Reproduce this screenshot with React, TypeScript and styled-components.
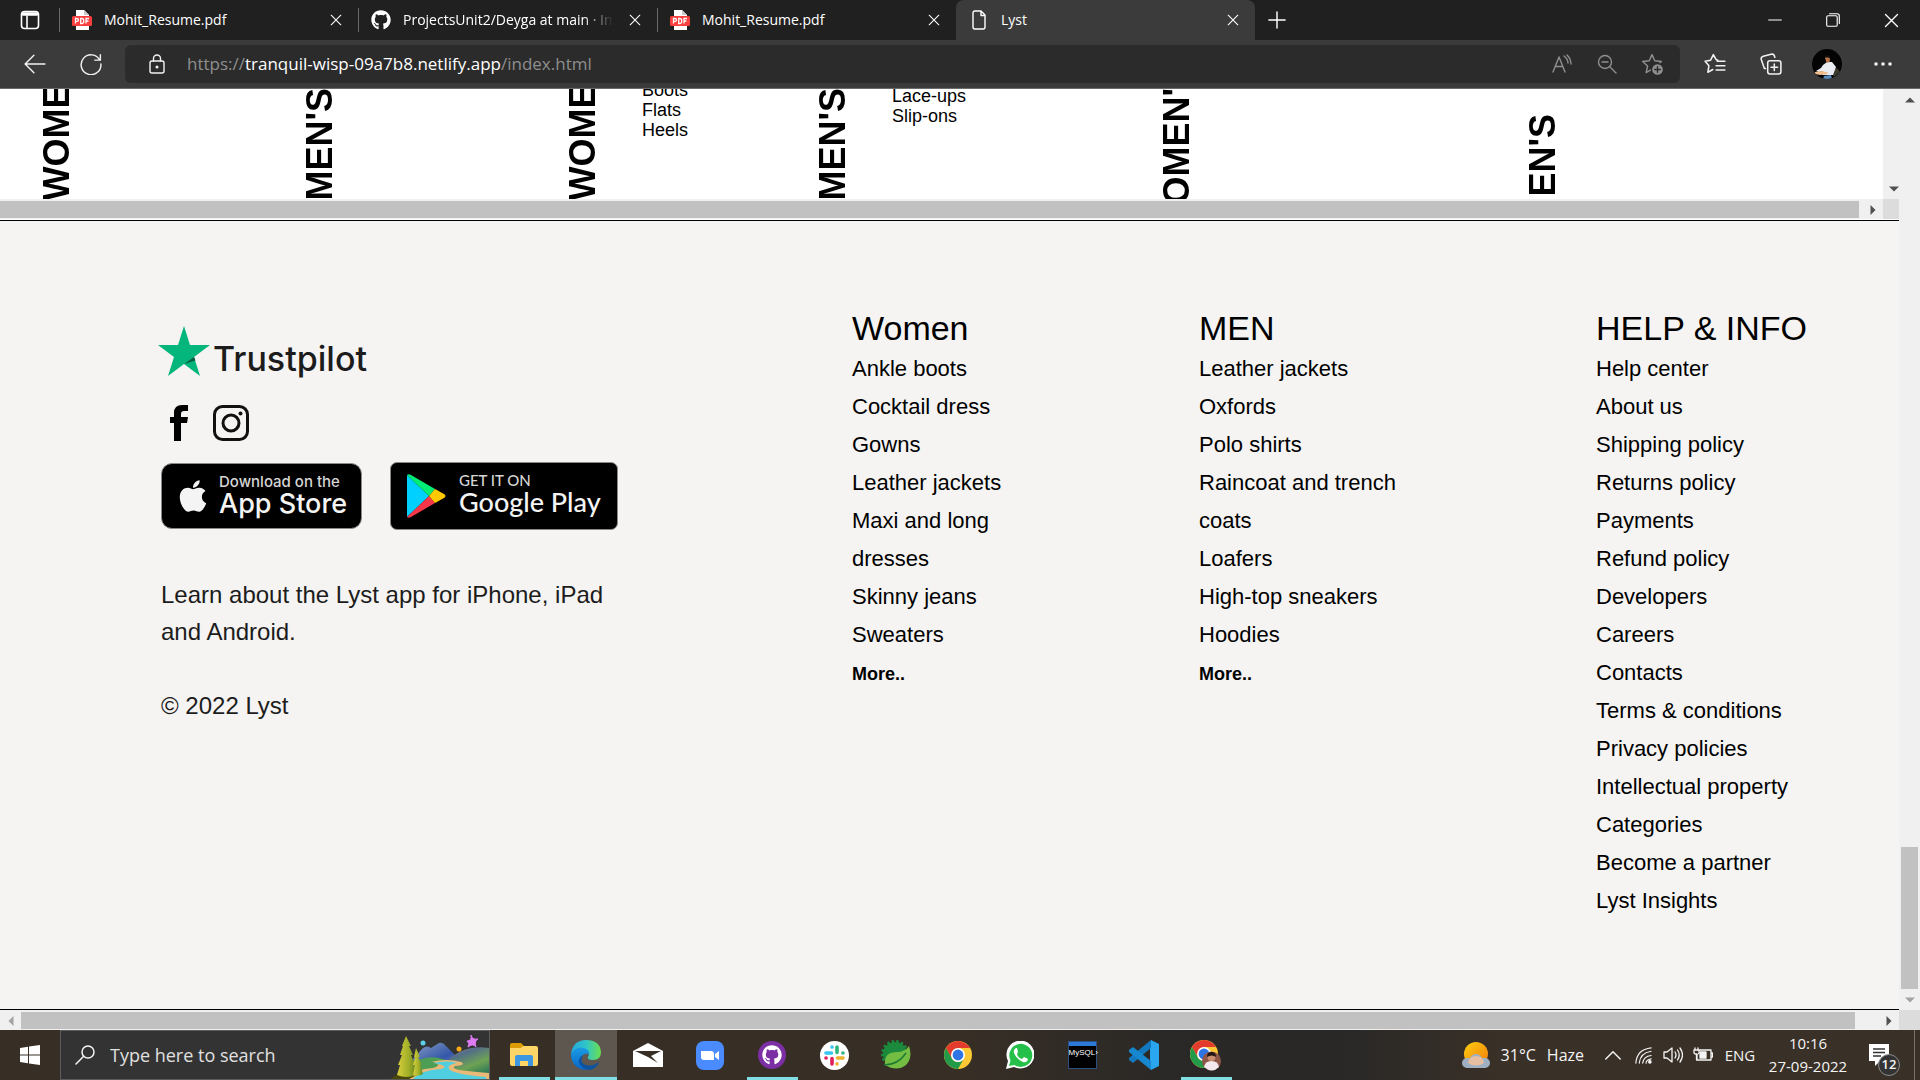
import React from "react";
import styled, { createGlobalStyle } from "styled-components";
import { FaApple, FaGithub } from "react-icons/fa";

const GlobalStyle = createGlobalStyle`
  * { box-sizing: border-box; }
  body { margin: 0; overflow: hidden; }
  button { border: 0; padding: 0; background: none; color: inherit; font: inherit; cursor: pointer; }
  a { color: inherit; text-decoration: none; }
  ul { list-style: none; margin: 0; padding: 0; }
  h2, h3, p { margin: 0; font-weight: 400; }
  svg { display: block; flex: none; }
`;

const uiFont = `"Open Sans", "Noto Sans", sans-serif`;
const siteFont = `"Liberation Sans", Arial, sans-serif`;

const Screen = styled.div`
  height: 100vh;
  display: flex;
  flex-direction: column;
  font-family: ${uiFont};
`;

/* ---------- tab strip ---------- */

const TabStrip = styled.header`
  display: flex;
  height: 40px;
  background: #202020;
  color: #fff;
`;

const TabMenu = styled.button`
  width: 59px;
  display: grid;
  place-items: center;
`;

const Tab = styled.div<{ $active?: boolean }>`
  flex: 0 1 299px;
  min-width: 0;
  display: flex;
  align-items: center;
  gap: 12px;
  padding: 0 12px 0 14px;
  font-size: 14px;
  background: ${(p) => (p.$active ? "#3b3b3b" : "transparent")};
  border-radius: ${(p) => (p.$active ? "8px 8px 0 0" : "0")};

  &::before {
    content: "";
    width: 1px;
    height: 24px;
    margin: 0 0 0 -14px;
    background: ${(p) => (p.$active ? "transparent" : "#6a6a6a")};
  }
`;

const TabTitle = styled.span<{ $fade?: boolean }>`
  flex: 1;
  overflow: hidden;
  white-space: nowrap;
  line-height: 24px;
  mask-image: ${(p) => (p.$fade ? "linear-gradient(90deg, #000 86%, transparent)" : "none")};
`;

const CloseTab = styled.button`
  width: 20px;
  height: 20px;
  display: grid;
  place-items: center;
`;

const NewTab = styled.button`
  width: 44px;
  display: grid;
  place-items: center;
`;

const WindowControls = styled.div`
  margin-left: auto;
  display: flex;
`;

const WindowButton = styled.button`
  width: 58px;
  display: grid;
  place-items: center;
`;

/* ---------- toolbar ---------- */

const Toolbar = styled.nav`
  display: flex;
  align-items: center;
  height: 49px;
  background: #3b3b3b;
  border-bottom: 1px solid #6b6b6b;
  color: #f2f2f2;
`;

const ToolButton = styled.button`
  width: 56px;
  height: 38px;
  display: grid;
  place-items: center;
`;

const NavGroup = styled.div`
  display: flex;
  padding: 0 6px 0 7px;
`;

const AddressBar = styled.div`
  flex: 1;
  display: flex;
  align-items: center;
  height: 38px;
  padding: 0 6px 0 10px;
  border-radius: 6px;
  background: #2b2b2b;
`;

const SiteInfo = styled.button`
  width: 44px;
  height: 38px;
  display: grid;
  place-items: center;
`;

const Address = styled.button`
  flex: 1;
  padding-left: 8px;
  text-align: left;
  font-size: 17px;
  line-height: 24px;
  color: #8f8f8f;
  cursor: text;
`;

const Host = styled.span`
  color: #fff;
`;

const BarButton = styled.button`
  width: 45px;
  height: 38px;
  display: grid;
  place-items: center;
  color: #8f8f8f;
`;

const ToolGroup = styled.div`
  display: flex;
  padding: 0 9px 0 7px;
`;

/* ---------- scrollbars ---------- */

const Track = styled.div<{ $vertical?: boolean }>`
  display: flex;
  flex: none;
  flex-direction: ${(p) => (p.$vertical ? "column" : "row")};
  ${(p) => (p.$vertical ? "width: 21px" : "height: 20px")};
  background: #f0f0f0;
`;

const ArrowButton = styled.button<{ $dim?: boolean }>`
  flex: none;
  width: 21px;
  height: 21px;
  display: grid;
  place-items: center;
  color: ${(p) => (p.$dim ? "#a3a3a3" : "#505050")};
`;

const Run = styled.div<{ $vertical?: boolean; $end?: boolean }>`
  flex: 1;
  display: flex;
  flex-direction: ${(p) => (p.$vertical ? "column" : "row")};
  justify-content: ${(p) => (p.$end ? "flex-end" : "flex-start")};
  padding: ${(p) => (p.$vertical ? "0 2px" : "2px 0 1px")};
`;

const Thumb = styled.div<{ $size: string }>`
  flex: 0 0 ${(p) => p.$size};
  background: #c1c1c1;
`;

const Corner = styled.div`
  flex: none;
  width: 21px;
  height: 20px;
  background: #dcdcdc;
`;

/* ---------- page ---------- */

const Viewport = styled.main`
  flex: 1;
  min-height: 0;
  display: grid;
  grid-template-columns: minmax(0, 1fr) 21px;
  grid-template-rows: minmax(0, 1fr) 20px;
  background: #fff;
`;

const Page = styled.div`
  display: flex;
  flex-direction: column;
  overflow: hidden;
  font-family: ${siteFont};
  color: #000;
`;

const MenuFrame = styled.section`
  display: grid;
  grid-template-columns: minmax(0, 1fr) 16px;
  grid-template-rows: 110px 21px;
  overflow: hidden;
`;

const MenuRow = styled.div`
  display: grid;
  grid-template-columns: 263fr 263fr 250fr 344fr 366fr 360fr;
  padding-left: 37px;
  overflow: hidden;
`;

const MenuColumn = styled.div`
  display: flex;
  align-items: flex-end;
  gap: 39px;
  height: 110px;
`;

const SideHeading = styled.h2<{ $drop: number }>`
  flex: none;
  margin-bottom: ${(p) => -p.$drop}px;
  writing-mode: vertical-rl;
  transform: rotate(180deg);
  font-size: 36px;
  line-height: 40px;
  font-weight: 700;
  white-space: nowrap;
`;

const MenuList = styled.ul<{ $rise: number }>`
  padding-bottom: ${(p) => p.$rise}px;
  font-size: 18px;
  line-height: 20px;
  li { margin: 0; white-space: nowrap; }
`;

const InnerBar = styled.div`
  width: 16px;
  height: 110px;
  display: flex;
  flex-direction: column;
  justify-content: flex-end;
  overflow: hidden;
  background: #f0f0f0;
`;

const Footer = styled.footer`
  flex: 1;
  display: grid;
  grid-template-columns: 692fr 347fr 397fr 303fr;
  align-items: start;
  padding: 86px 0 0 160px;
  background: #f5f4f2;
  border-top: 1px solid #000;
  border-bottom: 1px solid #000;
`;

const Brand = styled.div`
  display: flex;
  flex-direction: column;
  align-items: flex-start;
  padding-top: 19px;
  color: #1c1c1c;
`;

const Trust = styled.a`
  display: flex;
  align-items: flex-start;
  gap: 3px;
  height: 54px;
  font-family: Inter, ${siteFont};
  font-size: 34px;
  line-height: 66px;
  font-weight: 500;
  margin-left: -2px;
`;

const Social = styled.div`
  display: flex;
  gap: 16px;
  padding: 25px 0 21px 1px;
  color: #000;
  a { width: 36px; height: 36px; display: grid; place-items: center; }
`;

const Badges = styled.div`
  display: flex;
  align-items: center;
  gap: 28px;
  padding-left: 1px;
`;

const Badge = styled.a<{ $wide?: boolean }>`
  display: flex;
  align-items: center;
  gap: ${(p) => (p.$wide ? 13 : 8)}px;
  width: ${(p) => (p.$wide ? 228 : 201)}px;
  height: ${(p) => (p.$wide ? 68 : 66)}px;
  padding-left: ${(p) => (p.$wide ? 16 : 13)}px;
  border: 1px solid #8a8a8a;
  border-radius: ${(p) => (p.$wide ? 7 : 11)}px;
  background: #000;
  color: #f4f4f4;
`;

const BadgeText = styled.span<{ $wide?: boolean }>`
  display: flex;
  flex-direction: column;
  font-family: ${(p) => (p.$wide ? "Lato" : "Inter")}, sans-serif;
  font-size: 27px;
  line-height: 28px;
  font-weight: 500;
  white-space: nowrap;
  padding-bottom: ${(p) => (p.$wide ? 4 : 0)}px;
  small { font-size: 15px; line-height: 16px; color: #d6d6d6; }
`;

const About = styled.p`
  padding: 46px 0 0 1px;
  max-width: 470px;
  font-size: 24px;
  line-height: 37px;
`;

const Copyright = styled.p`
  padding: 37px 0 0 1px;
  font-size: 24px;
  line-height: 37px;
`;

const LinkColumn = styled.section`
  max-width: 228px;
`;

const ColumnTitle = styled.h3`
  font-size: 34px;
  line-height: 43px;
  white-space: nowrap;
`;

const Links = styled.ul<{ $width: number }>`
  max-width: ${(p) => p.$width}px;
  font-size: 22px;
  line-height: 38px;
`;

const More = styled.a`
  font-size: 18px;
  font-weight: 700;
`;

/* ---------- taskbar ---------- */

const Taskbar = styled.footer`
  flex: none;
  display: flex;
  height: 50px;
  background: linear-gradient(90deg, #372e25 0%, #372e25 50%, #292827 62%, #292827 70%, #393027 78%, #393027 100%);
  color: #f5f5f5;
`;

const Start = styled.button`
  width: 60px;
  display: grid;
  place-items: center;
`;

const Search = styled.label`
  display: flex;
  align-items: center;
  width: 430px;
  padding-left: 14px;
  gap: 15px;
  background: #333;
  border: 1px solid #5c5c5c;
  input {
    flex: 1;
    min-width: 0;
    border: 0;
    outline: 0;
    padding: 0;
    background: none;
    font-family: ${uiFont};
    font-size: 18px;
    color: #e4e4e4;
  }
  input::placeholder { color: #e0e0e0; opacity: 1; }
`;

const Apps = styled.div`
  display: flex;
  padding-left: 3px;
`;

const AppButton = styled.button<{ $state?: "open" | "active" }>`
  width: 62px;
  height: 50px;
  display: grid;
  place-items: center;
  background: ${(p) => (p.$state === "active" ? "#5d574f" : "none")};
  background-image: ${(p) => (p.$state ? "linear-gradient(#7fdfe4, #7fdfe4)" : "none")};
  background-repeat: no-repeat;
  background-position: center bottom;
  background-size: ${(p) => (p.$state === "active" ? 62 : 51)}px 3px;
`;

const Tray = styled.div`
  margin-left: auto;
  display: flex;
  align-items: center;
`;

const Weather = styled.button`
  display: flex;
  align-items: center;
  gap: 11px;
  margin-right: 14px;
  font-size: 16px;
`;

const TrayButton = styled.button<{ $w: number }>`
  width: ${(p) => p.$w}px;
  height: 50px;
  display: grid;
  place-items: center;
  font-size: 15px;
`;

const Clock = styled.button`
  width: 92px;
  font-size: 15px;
  line-height: 23px;
  text-align: center;
`;

const Notices = styled.button`
  position: relative;
  width: 50px;
  height: 50px;
  margin-right: 10px;
  display: grid;
  place-items: center;
`;

const Count = styled.span`
  position: absolute;
  left: 24px;
  top: 24px;
  width: 22px;
  height: 22px;
  border: 1px solid #8d8d8d;
  border-radius: 50%;
  background: #333;
  font-size: 13px;
  line-height: 19px;
  font-weight: 600;
`;

const ShowDesktop = styled.button`
  width: 6px;
  height: 50px;
  border-left: 1px solid #77716a;
`;

/* ---------- drawings ---------- */

const Line = ({ size = 20, w = 1.4, children }: { size?: number; w?: number; children: React.ReactNode }) => (
  <svg width={size} height={size} viewBox="0 0 20 20" fill="none" stroke="currentColor" strokeWidth={w} strokeLinecap="round" strokeLinejoin="round">
    {children}
  </svg>
);

const Cross = ({ size = 12 }: { size?: number }) => (
  <Line size={size} w={1.8}><path d="M2 2l16 16M18 2L2 18" /></Line>
);

const PdfIcon = () => (
  <svg width="20" height="20" viewBox="0 0 20 20">
    <path d="M4 0h8l5 5v15H4z" fill="#fff" />
    <path d="M12 0l5 5h-5z" fill="#c9c9c9" />
    <rect x="0" y="6" width="20" height="10" rx="1.5" fill="#f8403f" />
    <path d="M3.500 13.500v-5h1.500a1.400 1.400 0 0 1 0 2.900H3.500M8.700 8.500v5h1a2 2 0 0 0 2-2.500 2 2 0 0 0-2-2.500zM14 13.500v-5h3M14 11h2.500" fill="none" stroke="#fff" strokeWidth="1.300" />
  </svg>
);

const Arrow = ({ d }: { d: string }) => (
  <svg width="10" height="10" viewBox="0 0 10 10"><path d={d} fill="currentColor" /></svg>
);
const UP = "M0 7.500L5 2.500L10 7.500z";
const DOWN = "M0 2.500L5 7.500L10 2.500z";
const LEFT = "M7.500 0L2.500 5L7.500 10z";
const RIGHT = "M2.500 0L7.500 5L2.500 10z";

const TrustStar = () => (
  <svg width="52" height="50" viewBox="0 0 52 50">
    <path d="M26 0l6 19h20L36 31l6 19-16-12-16 12 6-19L0 19h20z" fill="#04b67b" />
    <path d="M37.500 34.500L36 31 26 38z" fill="#075c41" />
  </svg>
);

const FacebookMark = () => (
  <svg width="18" height="36" viewBox="0 0 18 36">
    <path d="M4 36V18H0v-6h4V8q0-8 8-8h6v6h-4q-3 0-3 3v3h7l-1 6h-6v18z" fill="#000" />
  </svg>
);

const InstagramMark = () => (
  <svg width="36" height="36" viewBox="0 0 36 36" fill="none" stroke="#111" strokeWidth="3">
    <rect x="1.500" y="1.500" width="33" height="33" rx="8" />
    <circle cx="18" cy="18" r="8" />
    <circle cx="27.500" cy="8.500" r="2" fill="#111" stroke="none" />
  </svg>
);

const PlayIcon = () => (
  <svg width="39" height="44" viewBox="0 0 39 44">
    <path d="M0 1v42l22-21z" fill="#00d0ff" />
    <path d="M0 1c1-1 2-1 4 0l24 14-6 7z" fill="#00ee76" />
    <path d="M0 43c1 1 2 1 4 0l24-14-6-7z" fill="#f6374a" />
    <path d="M28 15l9 5q3 2 0 4l-9 5-6-7z" fill="#ffc900" />
  </svg>
);

const Avatar = () => (
  <svg width="30" height="30" viewBox="0 0 30 30">
    <clipPath id="face"><circle cx="15" cy="15" r="15" /></clipPath>
    <g clipPath="url(#face)">
      <rect width="30" height="30" fill="#040404" />
      <path d="M19 22l6-3 3 4-6 5z" fill="#3c3a2c" />
      <path d="M11 16l4-3 5 0 4 5-3 8H10l1-4-4 1-3-1 5-3z" fill="#e9edf2" />
      <path d="M13 9q0-2 2.500-2t2.500 2.500-1 4h-2.500z" fill="#b9734b" />
      <path d="M12.500 8.500q.500-2.500 3-2.500t2.500 3.500l-2-1z" fill="#15100e" />
      <path d="M3 23l7-1 6 1.500-1 1.500-7 1-5-1z" fill="#f0bd8a" />
      <path d="M12 27l7-1 1 4h-9z" fill="#5a8cc0" />
    </g>
  </svg>
);

const Landscape = () => (
  <svg width="98" height="48" viewBox="0 0 98 48">
    <defs>
      <linearGradient id="mt" x1="0" x2="1" y2="1"><stop stopColor="#8ba2c4" /><stop offset=".6" stopColor="#3557a8" /><stop offset="1" stopColor="#6e84c8" /></linearGradient>
      <linearGradient id="hill" x1="0" y1="0" x2=".6" y2="1"><stop stopColor="#b69b8e" /><stop offset=".35" stopColor="#526e88" /><stop offset=".7" stopColor="#6ea254" /><stop offset="1" stopColor="#2f7a55" /></linearGradient>
      <linearGradient id="tree" x1="0" x2="1"><stop stopColor="#d9cf3c" /><stop offset=".6" stopColor="#9fae28" /><stop offset="1" stopColor="#5f7d1c" /></linearGradient>
    </defs>
    <path d="M20 30l12-13q4-3 8 0l8-5q4-1 7 3l8 8 6 9v6H22z" fill="url(#mt)" />
    <path d="M20 33q14-9 28-6l14 4-22 17H14z" fill="#4d9d55" />
    <path d="M54 32Q72 13 98 17v31H50z" fill="url(#hill)" />
    <path d="M40 31q16-4 30 0 6 3-6 4-4 2 4 4 16 2 30 3v6H16q8-10 26-11 10-3 0-6z" fill="#e9b977" />
    <path d="M42 32q16-3 24 0-12 2-7 7 8 5 36 7v2H22q8-9 28-10 10-3-8-6z" fill="#4fcfe0" />
    <path d="M0 48q8-8 20-4l4 1-6 3z" fill="#4b4708" />
    <path d="M15 5l5 10h-2l4 9h-2l5 11h-2l3 9q-11 4-20 0l3-10H7l4-10H9l3-9h-1z" fill="url(#tree)" />
    <path d="M25 17l4 9h-2l4 8h-2l3 9q-5 3-10 1l2-10h-2l2-8h-1z" fill="url(#tree)" />
    <circle cx="32" cy="12" r="2.500" fill="#5ecfe8" />
    <circle cx="68" cy="18" r="2.500" fill="#fbab18" />
    <path d="M80 4q1 5 7 4-4 2-2 8-3-4-8 0 2-4-1-6 5 0 4-6z" fill="#dd7bf2" stroke="#dd7bf2" />
  </svg>
);

const ExplorerIcon = () => (
  <svg width="28" height="24" viewBox="0 0 28 24">
    <path d="M0 2q0-2 2-2h9l3 3v6H0z" fill="#dd9b05" />
    <path d="M0 5h11l2-2h13q2 0 2 2v16q0 2-2 2H2q-2 0-2-2z" fill="#ffd565" />
    <path d="M5 23v-9q0-2 2-2h14q2 0 2 2v9h-5v-5h-8v5z" fill="#3d96e0" />
  </svg>
);

const EdgeIcon = () => (
  <svg width="30" height="30" viewBox="0 0 30 30">
    <defs>
      <linearGradient id="eg" x1="0" x2="1"><stop stopColor="#24a7e0" /><stop offset=".5" stopColor="#2fc5c8" /><stop offset="1" stopColor="#6be04e" /></linearGradient>
      <linearGradient id="eb" x1="0" x2="0" y2="1"><stop stopColor="#1a9ce2" /><stop offset="1" stopColor="#0a66c9" /></linearGradient>
    </defs>
    <path d="M0 14Q2 0 15 0q14 0 15 12 0 8-8 8-6 0-5-3 3-4-2-7Q7 5 0 14z" fill="url(#eg)" />
    <path d="M0 14Q5 6 13 8q6 2 5 7-2-3-6 0-4 5 1 10 3 4 7 4Q9 32 3 24 0 20 0 14z" fill="url(#eb)" />
    <path d="M12 15q-4 8 3 10 6 2 13-3-2 6-9 8-8-1-11-7-1-5 4-8z" fill="#0c54a0" />
  </svg>
);

const MailIcon = () => (
  <svg width="30" height="24" viewBox="0 0 30 24">
    <path d="M0 8L15 0l15 8v16H0z" fill="#fff" />
    <path d="M2 8h26L18 13l7 7-10-6z" fill="#372e25" />
  </svg>
);

const ZoomIcon = () => (
  <svg width="28" height="29" viewBox="0 0 28 29">
    <rect width="28" height="29" rx="8" fill="#4a8cff" />
    <path d="M5 10h10q3 0 3 3v6H8q-3 0-3-3zM19 13l4-3v9l-4-3z" fill="#fff" />
  </svg>
);

const GithubDesktop = () => (
  <svg width="28" height="28" viewBox="0 0 28 28">
    <circle cx="14" cy="14" r="14" fill="#7c2fa4" />
    <g transform="translate(4 4)"><FaGithub size={20} color="#fff" /></g>
  </svg>
);

const SlackIcon = () => (
  <svg width="29" height="29" viewBox="0 0 29 29">
    <circle cx="14.500" cy="14.500" r="14.500" fill="#fff" />
    <g strokeWidth="3.600" strokeLinecap="round">
      <path d="M6 12h5.500M12 6v.1" stroke="#36c5f0" />
      <path d="M17 6v5.500M23 12h-.1" stroke="#2eb67d" />
      <path d="M23 17h-5.500M17 23v-.1" stroke="#ecb22e" />
      <path d="M12 23v-5.500M6 17h.1" stroke="#e01e5a" />
    </g>
  </svg>
);

const SpringIcon = () => (
  <svg width="30" height="30" viewBox="0 0 30 30">
    <circle cx="14" cy="14" r="12" fill="#1c8a3c" />
    <circle cx="14" cy="14" r="12.500" fill="none" stroke="#1c8a3c" strokeWidth="3" strokeDasharray="2.500 2.100" />
    <path d="M4 24Q3 12 16 12q8 0 12-6 4 12-3 19-9 7-21 0z" fill="#74bd43" />
    <path d="M3 25q14 0 22-12" fill="none" stroke="#1d7a34" strokeWidth="1.500" />
  </svg>
);

const ChromeMark = () => (
  <g>
    <circle cx="14" cy="14" r="14" fill="#fcc934" />
    <path d="M14 7h12.100A14 14 0 0 0 1.900 7L8 17.500z" fill="#e33b2e" />
    <path d="M1.900 7A14 14 0 0 0 14 28l6-10.500A7 7 0 0 1 8 17.500z" fill="#229a4a" />
    <circle cx="14" cy="14" r="7" fill="#fff" />
    <circle cx="14" cy="14" r="5.400" fill="#2f74e4" />
  </g>
);

const ChromeIcon = () => (
  <svg width="28" height="28" viewBox="0 0 28 28"><ChromeMark /></svg>
);

const ChromeProfile = () => (
  <svg width="32" height="31" viewBox="0 0 32 31">
    <ChromeMark />
    <circle cx="21.500" cy="21" r="9.500" fill="#8d5748" />
    <path d="M14 27q1-6 7.500-6t7.500 6q-7 7-15 0z" fill="#f3e9ee" />
    <circle cx="21.500" cy="17" r="4" fill="#c98e70" />
    <path d="M17 17q0-5 4.500-5t4.500 5q-4-3-9 0z" fill="#221514" />
  </svg>
);

const WhatsappIcon = () => (
  <svg width="28" height="28" viewBox="0 0 28 28">
    <path d="M0 28l2-8A14 14 0 1 1 8 26z" fill="#fff" />
    <path d="M3 25l1.500-5.500A11.500 11.500 0 1 1 8.500 24z" fill="#25c04a" />
    <path d="M10 7q-4 2-1 7t8 7q4 1 5-3l-4-2-2 2q-4-1-5-5l1-2-1-4z" fill="#fff" />
  </svg>
);

const MysqlBox = styled.span`
  display: flex;
  flex-direction: column;
  width: 29px;
  height: 28px;
  padding-top: 5px;
  border: 1px solid #2c4f80;
  background: linear-gradient(#2b79d8 4px, #000 4px);
  font-family: "Liberation Sans", sans-serif;
  font-size: 8px;
  line-height: 12px;
  color: #fff;
`;

const VscodeIcon = () => (
  <svg width="30" height="30" viewBox="0 0 30 30">
    <path d="M22 0l8 4v22l-8 4-1-6V6z" fill="#2aa5f0" />
    <path d="M22 0v8L4 23 0 20v-2z" fill="#1478be" />
    <path d="M0 10l4-3 18 14v9L0 12z" fill="#1787d0" />
  </svg>
);

const WeatherIcon = () => (
  <svg width="28" height="28" viewBox="0 0 28 28">
    <defs><linearGradient id="sun" x1="0" x2="1" y2="1"><stop stopColor="#ffcf0f" /><stop offset="1" stopColor="#f07a0c" /></linearGradient></defs>
    <circle cx="14" cy="13" r="12" fill="url(#sun)" />
    <path d="M5 27a5 5 0 0 1 0-10l3 0q2-4 6-4t6 4h3a5 5 0 0 1 0 10z" fill="#9fb0c2" />
    <path d="M6 22q1-7 8-7t8 7q-8 5-16 0z" fill="#e5bf9f" />
  </svg>
);

/* ---------- data ---------- */

const menu = [
  { title: "WOMEN'S", drop: 2 },
  { title: "MEN'S", drop: 2 },
  { title: "WOMEN'S", drop: 2, rise: 59, items: ["Boots", "Flats", "Heels"] },
  { title: "MEN'S", drop: 2, rise: 73, items: ["Lace-ups", "Slip-ons"] },
  { title: "WOMEN'S", drop: 40 },
  { title: "MEN'S", drop: 28 },
];

const columns = [
  {
    title: "Women",
    width: 180,
    links: ["Ankle boots", "Cocktail dress", "Gowns", "Leather jackets", "Maxi and long dresses", "Skinny jeans", "Sweaters"],
    more: true,
  },
  {
    title: "MEN",
    width: 228,
    links: ["Leather jackets", "Oxfords", "Polo shirts", "Raincoat and trench coats", "Loafers", "High-top sneakers", "Hoodies"],
    more: true,
  },
  {
    title: "HELP & INFO",
    width: 228,
    links: [
      "Help center", "About us", "Shipping policy", "Returns policy", "Payments", "Refund policy", "Developers", "Careers",
      "Contacts", "Terms & conditions", "Privacy policies", "Intellectual property", "Categories", "Become a partner", "Lyst Insights",
    ],
  },
];

const tabs = [
  { title: "Mohit_Resume.pdf", icon: <PdfIcon /> },
  { title: "ProjectsUnit2/Deyga at main · Im", icon: <FaGithub size={20} />, fade: true },
  { title: "Mohit_Resume.pdf", icon: <PdfIcon /> },
  { title: "Lyst", icon: <Line><path d="M4 3q0-2 2-2h6l4 4v12q0 2-2 2H6q-2 0-2-2zM12 1v4.500h4" /></Line>, active: true },
];

const apps: { name: string; icon: React.ReactNode; state?: "open" | "active" }[] = [
  { name: "File Explorer", icon: <ExplorerIcon />, state: "open" },
  { name: "Edge", icon: <EdgeIcon />, state: "active" },
  { name: "Mail", icon: <MailIcon /> },
  { name: "Zoom", icon: <ZoomIcon /> },
  { name: "GitHub Desktop", icon: <GithubDesktop />, state: "open" },
  { name: "Slack", icon: <SlackIcon /> },
  { name: "Spring Tools", icon: <SpringIcon /> },
  { name: "Chrome", icon: <ChromeIcon /> },
  { name: "WhatsApp", icon: <WhatsappIcon /> },
  { name: "MySQL Shell", icon: <MysqlBox>MySQL›</MysqlBox> },
  { name: "VS Code", icon: <VscodeIcon /> },
  { name: "Chrome profile", icon: <ChromeProfile />, state: "open" },
];

const STAR = "M10 1.500l2.500 5.600 6 .6-4.500 4.100 1.300 6L10 14.700l-5.300 3.100 1.300-6L1.500 7.700l6-.6z";

export default function App() {
  return (
    <Screen>
      <GlobalStyle />
      <TabStrip>
        <TabMenu aria-label="Tab actions">
          <Line w={1.6}><rect x="1.500" y="1.500" width="17" height="17" rx="3" /><path d="M3 4h14" strokeWidth="3.500" /><path d="M7 6v12" /></Line>
        </TabMenu>
        {tabs.map((t, i) => (
          <Tab key={i} $active={t.active}>
            {t.icon}
            <TabTitle $fade={t.fade}>{t.title}</TabTitle>
            <CloseTab aria-label="Close tab"><Cross /></CloseTab>
          </Tab>
        ))}
        <NewTab aria-label="New tab"><Line size={18} w={1.6}><path d="M10 1v18M1 10h18" /></Line></NewTab>
        <WindowControls>
          <WindowButton aria-label="Minimize"><Line size={14} w={1.6}><path d="M1 10h18" /></Line></WindowButton>
          <WindowButton aria-label="Restore"><Line size={14} w={1.6}><rect x="1" y="4" width="15" height="15" rx="2" /><path d="M5 1h11q3 0 3 3v11" /></Line></WindowButton>
          <WindowButton aria-label="Close"><Cross size={15} /></WindowButton>
        </WindowControls>
      </TabStrip>

      <Toolbar>
        <NavGroup>
          <ToolButton aria-label="Back"><Line size={22} w={1.3}><path d="M19 10H1M9 2l-8 8 8 8" /></Line></ToolButton>
          <ToolButton aria-label="Refresh"><Line size={22} w={1.3}><path d="M18 6.500A9 9 0 1 0 19 10M18.500 1.500v5h-5" /></Line></ToolButton>
        </NavGroup>
        <AddressBar>
          <SiteInfo aria-label="Site information">
            <Line w={1.4}><rect x="3" y="7" width="14" height="12" rx="2" /><path d="M6.500 7V4.500a3.500 3.500 0 0 1 7 0V7" /><circle cx="10" cy="13" r=".8" fill="currentColor" /></Line>
          </SiteInfo>
          <Address aria-label="Address">https://<Host>tranquil-wisp-09a7b8.netlify.app</Host>/index.html</Address>
          <BarButton aria-label="Read aloud"><Line><path d="M1 18L7 3l6 15M3.500 12.500h7M12 2q4 3 4 7M15 1q4 4 4 9" /></Line></BarButton>
          <BarButton aria-label="Zoom out"><Line><circle cx="8" cy="8" r="6.500" /><path d="M13 13l6 6M5 8h6" /></Line></BarButton>
          <BarButton aria-label="Add to favorites">
            <Line size={22} w={1.3}><path d={STAR} /><circle cx="15" cy="15" r="5.500" fill="currentColor" stroke="#2b2b2b" /><path d="M15 12.500v5M12.500 15h5" stroke="#2b2b2b" /></Line>
          </BarButton>
        </AddressBar>
        <ToolGroup>
          <ToolButton aria-label="Favorites"><Line size={22}><path d="M12.500 6.500L11 6 8.500 1.500 6 6.500l-5 1 3.500 4-1 6 4.500-2.500M12 7.500h7M11 11.500h8M11 15.500h8" /></Line></ToolButton>
          <ToolButton aria-label="Collections"><Line size={22}><rect x="7" y="7" width="12" height="12" rx="2" /><path d="M13 10v6M10 13h6M5 14L4 14 1 5.500Q1 3.500 3 3l8-2q2 0 2.500 3" /></Line></ToolButton>
          <ToolButton aria-label="Profile"><Avatar /></ToolButton>
          <ToolButton aria-label="More"><svg width="18" height="4" viewBox="0 0 18 4" fill="currentColor"><circle cx="2" cy="2" r="1.800" /><circle cx="9" cy="2" r="1.800" /><circle cx="16" cy="2" r="1.800" /></svg></ToolButton>
        </ToolGroup>
      </Toolbar>

      <Viewport>
        <Page>
          <MenuFrame>
            <MenuRow>
              {menu.map((m, i) => (
                <MenuColumn key={i}>
                  <SideHeading $drop={m.drop}>{m.title}</SideHeading>
                  {m.items && <MenuList $rise={m.rise}>{m.items.map((t) => <li key={t}><a href="#">{t}</a></li>)}</MenuList>}
                </MenuColumn>
              ))}
            </MenuRow>
            <InnerBar><ArrowButton aria-label="Scroll down"><Arrow d={DOWN} /></ArrowButton></InnerBar>
            <Track>
              <Run><Thumb $size="calc(100% - 3px)" /></Run>
              <ArrowButton aria-label="Scroll right"><Arrow d={RIGHT} /></ArrowButton>
            </Track>
            <Corner />
          </MenuFrame>
          <Footer>
            <Brand>
              <Trust href="#"><TrustStar />Trustpilot</Trust>
              <Social>
                <a href="#" aria-label="Facebook"><FacebookMark /></a>
                <a href="#" aria-label="Instagram"><InstagramMark /></a>
              </Social>
              <Badges>
                <Badge href="#">
                  <FaApple size={36} />
                  <BadgeText><small>Download on the</small>App Store</BadgeText>
                </Badge>
                <Badge href="#" $wide>
                  <PlayIcon />
                  <BadgeText $wide><small>GET IT ON</small>Google Play</BadgeText>
                </Badge>
              </Badges>
              <About>Learn about the Lyst app for iPhone, iPad and Android.</About>
              <Copyright>© 2022 Lyst</Copyright>
            </Brand>
            {columns.map((c) => (
              <LinkColumn key={c.title}>
                <ColumnTitle>{c.title}</ColumnTitle>
                <Links $width={c.width}>
                  {c.links.map((l) => <li key={l}><a href="#">{l}</a></li>)}
                  {c.more && <li><More href="#">More..</More></li>}
                </Links>
              </LinkColumn>
            ))}
          </Footer>
        </Page>
        <Track $vertical>
          <ArrowButton aria-label="Scroll up"><Arrow d={UP} /></ArrowButton>
          <Run $vertical $end><Thumb $size="142px" /></Run>
          <ArrowButton $dim aria-label="Scroll down"><Arrow d={DOWN} /></ArrowButton>
        </Track>
        <Track>
          <ArrowButton $dim aria-label="Scroll left"><Arrow d={LEFT} /></ArrowButton>
          <Run><Thumb $size="calc(100% - 23px)" /></Run>
          <ArrowButton aria-label="Scroll right"><Arrow d={RIGHT} /></ArrowButton>
        </Track>
        <Corner />
      </Viewport>

      <Taskbar>
        <Start aria-label="Start">
          <svg width="20" height="20" viewBox="0 0 20 20" fill="#fff"><path d="M0 3l8-1.200V9.500H0zM9 1.600L20 0v9.500H9zM0 10.500h8v7.700L0 17zM9 10.500h11V20L9 18.400z" /></svg>
        </Start>
        <Search>
          <Line w={1.5}><circle cx="13" cy="7" r="6" /><path d="M8.700 11.300L1 19" /></Line>
          <input type="text" aria-label="Search" placeholder="Type here to search" />
          <Landscape />
        </Search>
        <Apps>
          {apps.map((a) => <AppButton key={a.name} aria-label={a.name} $state={a.state}>{a.icon}</AppButton>)}
        </Apps>
        <Tray>
          <Weather><WeatherIcon /><span>31°C</span><span>Haze</span></Weather>
          <TrayButton $w={30} aria-label="Hidden icons"><Line size={16} w={1.8}><path d="M1 15l9-9 9 9" /></Line></TrayButton>
          <TrayButton $w={30} aria-label="Network"><Line size={17} w={1.3}><path d="M1 19Q2 3 19 1M5 19Q6 7 19 5M9 19q1-8 10-9M13 19q0-4 6-5" /><circle cx="17.500" cy="17.500" r="1.500" fill="currentColor" /></Line></TrayButton>
          <TrayButton $w={30} aria-label="Volume"><Line w={1.3}><path d="M1 7h3l5-4v14l-5-4H1zM12 7q2 3 0 6M14.500 5q3.500 5 0 10M17 3q5 7 0 14" /></Line></TrayButton>
          <TrayButton $w={30} aria-label="Battery">
            <Line w={1.3}><path d="M6 5h12v10H4v-5M18 8h1.500v4H18M1 5h5v3q-2 3-5 0zM2 3v2M5 3v2M3.500 9v6" /><rect x="7" y="7" width="6" height="6" fill="currentColor" /></Line>
          </TrayButton>
          <TrayButton $w={44}>ENG</TrayButton>
          <Clock>10:16<br />27-09-2022</Clock>
          <Notices aria-label="Notifications, 12 new">
            <svg width="20" height="22" viewBox="0 0 20 22"><path d="M0 0h20v17h-9l-5 5v-5H0z" fill="#fff" /><path d="M4 5h12M4 8.500h12M4 12h8" stroke="#333" strokeWidth="1.400" /></svg>
            <Count>12</Count>
          </Notices>
          <ShowDesktop aria-label="Show desktop" />
        </Tray>
      </Taskbar>
    </Screen>
  );
}
